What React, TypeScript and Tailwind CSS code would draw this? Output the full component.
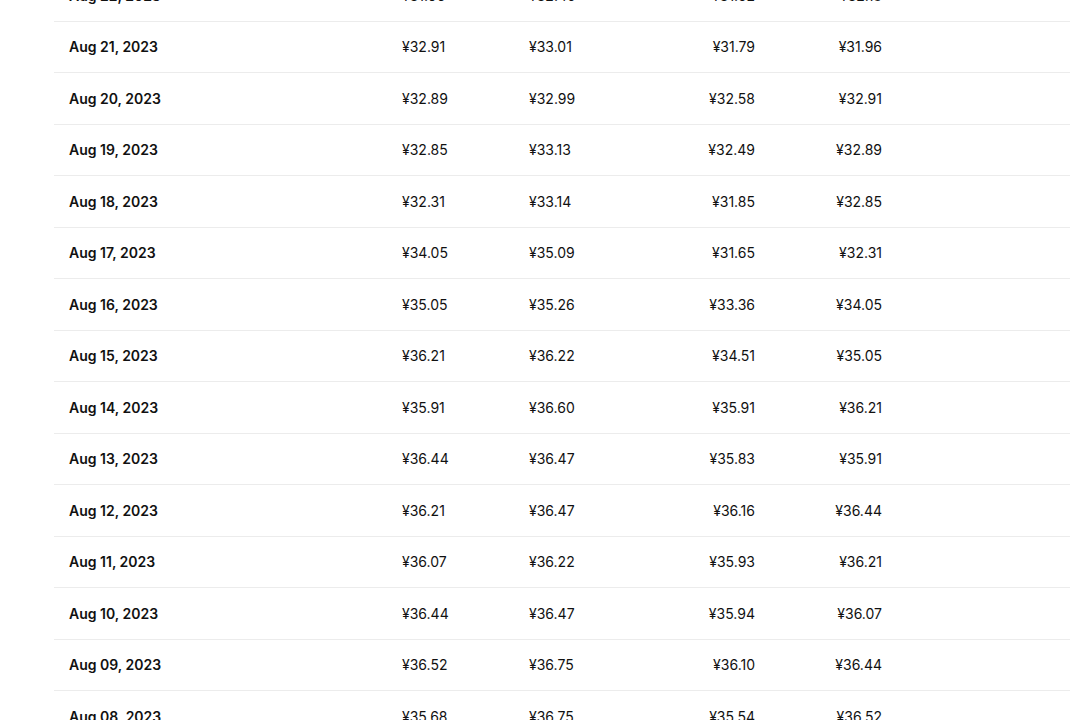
import React from "react";

const rows: [string, string, string, string, string][] = [
  ["Aug 22, 2023", "¥31.96", "¥32.40", "¥31.52", "¥32.18"],
  ["Aug 21, 2023", "¥32.91", "¥33.01", "¥31.79", "¥31.96"],
  ["Aug 20, 2023", "¥32.89", "¥32.99", "¥32.58", "¥32.91"],
  ["Aug 19, 2023", "¥32.85", "¥33.13", "¥32.49", "¥32.89"],
  ["Aug 18, 2023", "¥32.31", "¥33.14", "¥31.85", "¥32.85"],
  ["Aug 17, 2023", "¥34.05", "¥35.09", "¥31.65", "¥32.31"],
  ["Aug 16, 2023", "¥35.05", "¥35.26", "¥33.36", "¥34.05"],
  ["Aug 15, 2023", "¥36.21", "¥36.22", "¥34.51", "¥35.05"],
  ["Aug 14, 2023", "¥35.91", "¥36.60", "¥35.91", "¥36.21"],
  ["Aug 13, 2023", "¥36.44", "¥36.47", "¥35.83", "¥35.91"],
  ["Aug 12, 2023", "¥36.21", "¥36.47", "¥36.16", "¥36.44"],
  ["Aug 11, 2023", "¥36.07", "¥36.22", "¥35.93", "¥36.21"],
  ["Aug 10, 2023", "¥36.44", "¥36.47", "¥35.94", "¥36.07"],
  ["Aug 09, 2023", "¥36.52", "¥36.75", "¥36.10", "¥36.44"],
  ["Aug 08, 2023", "¥35.68", "¥36.75", "¥35.54", "¥36.52"],
];

export default function App() {
  return (
    <div
      className="h-[720px] overflow-hidden bg-white text-[14px] text-[#111111]"
      style={{ fontFamily: "Inter, 'Noto Sans', sans-serif" }}
    >
      <div className="ml-[54px] mt-[-30px]">
        {rows.map((r) => (
          <div
            key={r[0]}
            className="flex h-[51.5px] items-center border-b border-[#ececec]"
          >
            <div className="w-[332px] pl-[15px] font-semibold">{r[0]}</div>
            <div className="w-[127px] pl-4">{r[1]}</div>
            <div className="w-[128px] pl-4">{r[2]}</div>
            <div className="w-[130px] pr-4 text-right">{r[3]}</div>
            <div className="w-[127px] pr-4 text-right">{r[4]}</div>
            <div className="flex-1" />
          </div>
        ))}
      </div>
    </div>
  );
}
